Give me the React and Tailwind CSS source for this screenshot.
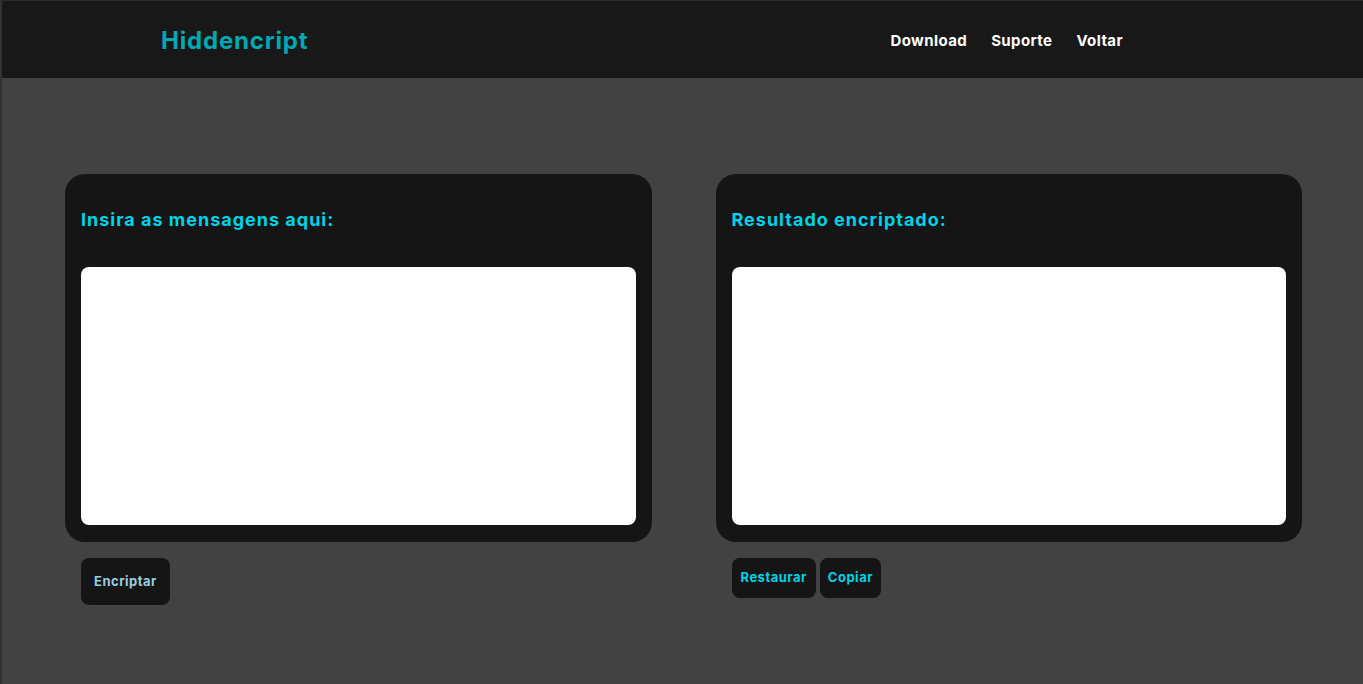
export default function App() {
  const font = { fontFamily: 'Inter, "Noto Sans", sans-serif' }

  return (
    <div style={font} className="min-h-[684px] bg-[#424242] border-t border-t-[#2b2b33] border-l-2 border-l-[#333333] flex flex-col">
      {/* Header */}
      <header className="h-[77px] bg-[#181818] flex items-center justify-between pl-[159px] pr-[240px]">
        <h1 className="text-[24px] font-bold text-[#00a9b3] tracking-[0.8px] pt-[2px]">Hiddencript</h1>
        <nav className="flex items-center gap-6 text-[15px] font-bold text-white tracking-[0.4px] pt-[3px]">
          <a href="#">Download</a>
          <a href="#">Suporte</a>
          <a href="#">Voltar</a>
        </nav>
      </header>

      {/* Main */}
      <main className="grid grid-cols-2 gap-16 pl-[63px] pr-[61px] pt-[96px]">
        <section>
          <div className="bg-[#151515] rounded-[20px] px-4 pt-[34px] pb-[17px]">
            <h2 className="text-[18px] leading-6 font-bold text-[#00d3e6] tracking-[1px]">Insira as mensagens aqui:</h2>
            <textarea className="mt-[35px] block w-full h-[258px] bg-white rounded-lg resize-none outline-none p-3" />
          </div>
          <div className="mt-4 pl-4 flex gap-1">
            <button className="h-[47px] px-[13px] bg-[#151515] rounded-lg text-[13px] font-bold text-[#98cde0] tracking-[0.5px]">
              Encriptar
            </button>
          </div>
        </section>

        <section>
          <div className="bg-[#151515] rounded-[20px] px-4 pt-[34px] pb-[17px]">
            <h2 className="text-[18px] leading-6 font-bold text-[#00d3e6] tracking-[1px]">Resultado encriptado:</h2>
            <textarea readOnly className="mt-[35px] block w-full h-[258px] bg-white rounded-lg resize-none outline-none p-3" />
          </div>
          <div className="mt-4 pl-4 flex gap-1">
            <button className="h-10 px-[9px] bg-[#151515] rounded-lg text-[13px] font-bold text-[#00d3e6] tracking-[0.5px]">
              Restaurar
            </button>
            <button className="h-10 px-[8px] bg-[#151515] rounded-lg text-[13px] font-bold text-[#00d3e6] tracking-[0.5px]">
              Copiar
            </button>
          </div>
        </section>
      </main>
    </div>
  )
}
